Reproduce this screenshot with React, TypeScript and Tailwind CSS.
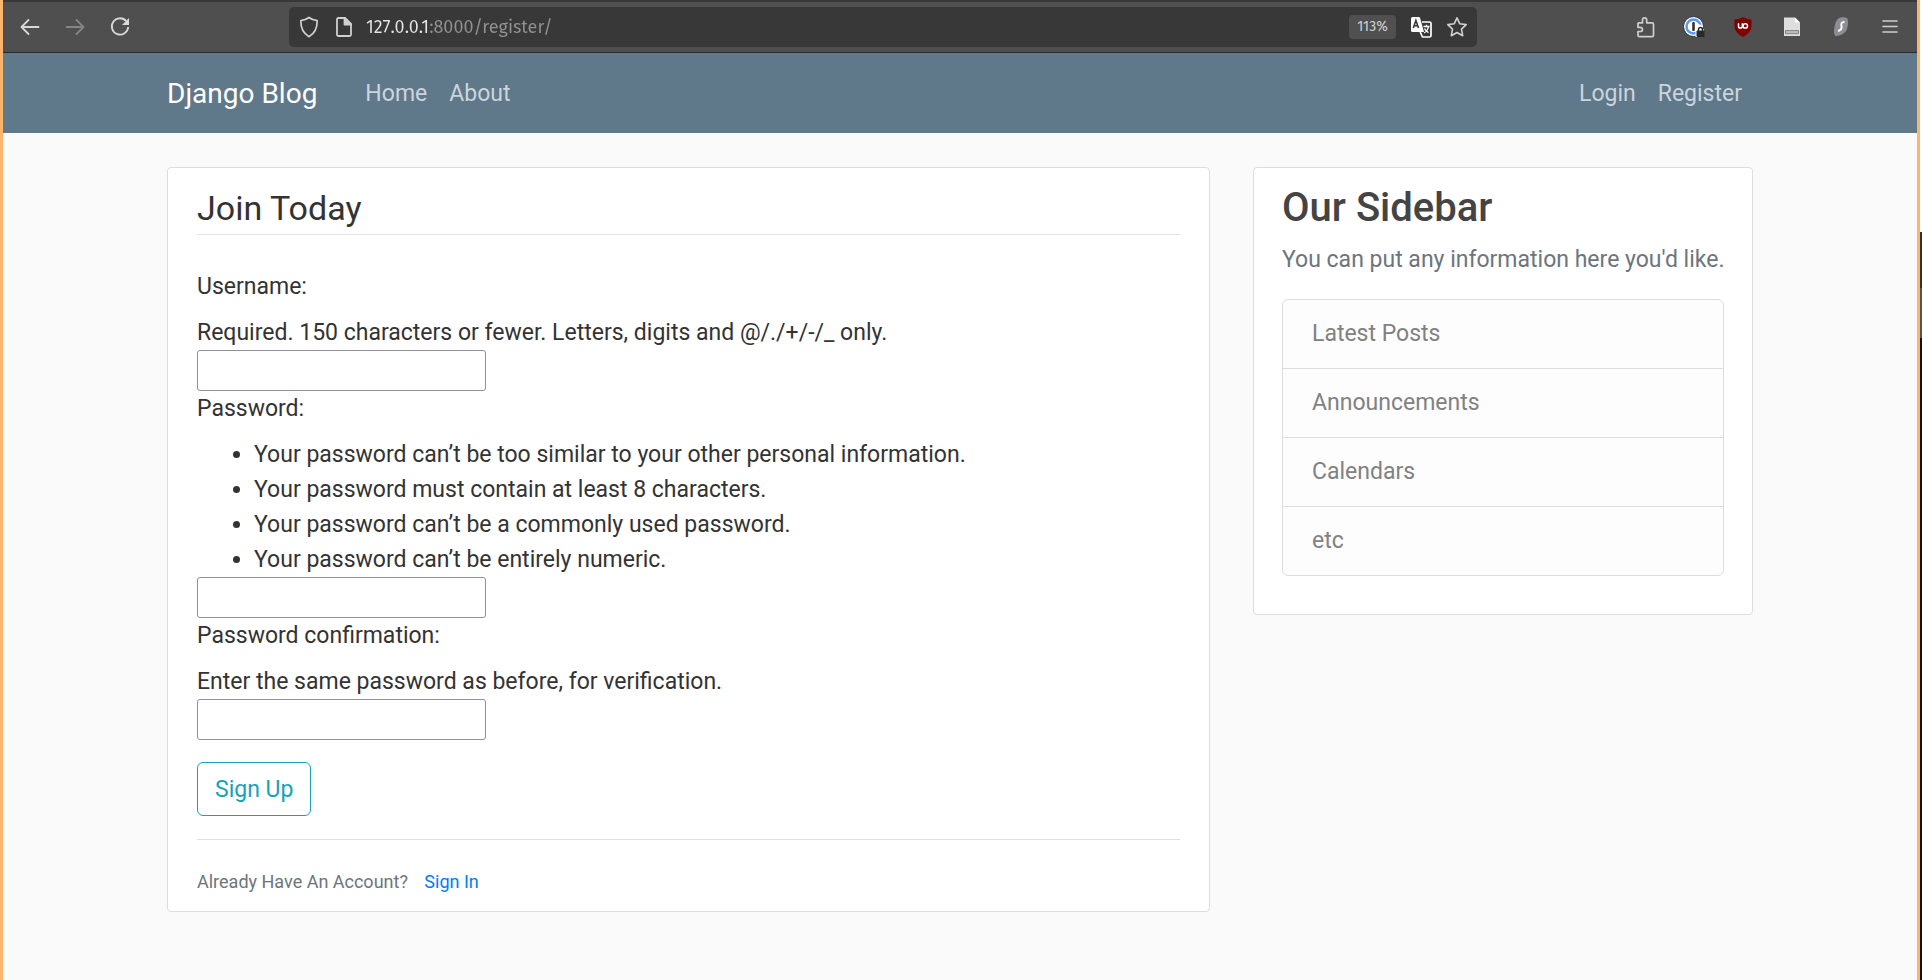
import React from "react";

type FieldProps = { id: string; label: string; type: string; children: React.ReactNode };

function Field({ id, label, type, children }: FieldProps) {
  return (
    <div>
      <label htmlFor={id} className="mb-[11px] block">{label}</label>
      {children}
      <input
        id={id}
        type={type}
        className="block h-[41px] w-[289px] rounded-[3px] border border-[#8f8f9d] bg-white px-1 outline-none"
      />
    </div>
  );
}

const passwordRules = [
  "Your password can’t be too similar to your other personal information.",
  "Your password must contain at least 8 characters.",
  "Your password can’t be a commonly used password.",
  "Your password can’t be entirely numeric.",
];

const sidebarItems = ["Latest Posts", "Announcements", "Calendars", "etc"];

function BrowserBar() {
  return (
    <div className="flex h-[53px] items-center border-t-2 border-b border-t-[#383838] border-b-[#2a2a2a] bg-[#4f4f4f] pr-4 pl-4 font-['Fira_Sans','Noto_Sans',sans-serif] text-[#d0d0d0]">
      <div className="flex w-[270px] shrink-0 items-center gap-[23px]">
        <button aria-label="Back" className="text-[#d8d8d8]">
          <svg width="22" height="22" viewBox="0 0 22 22" fill="none" stroke="currentColor" strokeWidth="1.8" strokeLinecap="round" strokeLinejoin="round"><path d="M19.5 11H3M9.5 4 2.5 11l7 7" /></svg>
        </button>
        <button aria-label="Forward" className="text-[#858585]">
          <svg width="22" height="22" viewBox="0 0 22 22" fill="none" stroke="currentColor" strokeWidth="1.8" strokeLinecap="round" strokeLinejoin="round"><path d="M2.5 11H19M12.5 4l7 7-7 7" /></svg>
        </button>
        <button aria-label="Reload" className="text-[#d8d8d8]">
          <svg width="22" height="22" viewBox="0 0 22 22" fill="none" stroke="currentColor" strokeWidth="1.8"><path d="M17.3 5.2A8.2 8.2 0 1 0 19.2 11" /><path d="M20 2v7h-7z" fill="currentColor" stroke="none" /></svg>
        </button>
      </div>
      <div className="flex h-10 min-w-0 flex-1 items-center rounded-[5px] bg-[#383838] px-[9px]">
        <svg width="22" height="22" viewBox="0 0 22 22" fill="none" stroke="currentColor" strokeWidth="1.7" strokeLinejoin="round"><path d="M11 1.5c2.4 1.9 4.900 2.800 8.200 3.100C19.300 12 17 17.300 11 20.700C5 17.300 2.700 12 2.800 4.600 6.100 4.300 8.600 3.400 11 1.500z" /></svg>
        <svg className="ml-[13px]" width="22" height="22" viewBox="0 0 22 22" fill="none" stroke="currentColor" strokeWidth="1.8" strokeLinejoin="round"><path d="M5.500 2h6.500l6 6v10.500a1.500 1.500 0 0 1-1.500 1.500h-11A1.500 1.500 0 0 1 4 18.500v-15A1.500 1.500 0 0 1 5.500 2z" /><path d="M11.500 2v6.500H18z" fill="currentColor" /></svg>
        <input
          type="text"
          aria-label="Address"
          defaultValue="127.0.0.1:8000/register/"
          className="ml-[11px] h-8 min-w-0 flex-1 bg-[linear-gradient(90deg,#e4e4e4_62px,#919191_62px)] bg-clip-text text-[18px] text-transparent outline-none"
        />
        <button className="h-6 w-[47px] rounded-[4px] bg-[#505050] text-[14px] leading-6 text-[#d0d0d0]">113%</button>
        <button aria-label="Translate" className="ml-[14px]">
          <svg width="22" height="22" viewBox="0 0 22 22"><path d="M2.500 1h6.200a1.500 1.500 0 0 1 1.400 1L14 16H2.500A1.500 1.500 0 0 1 1 14.500v-12A1.500 1.500 0 0 1 2.500 1z" fill="#fff" /><path d="M3.300 12 5.900 4.500 8.500 12M4.200 9.700h3.500" fill="none" stroke="#383838" strokeWidth="1.600" /><path d="M12 6h7.500A1.500 1.500 0 0 1 21 7.500v12a1.500 1.500 0 0 1-1.500 1.500h-7l-2.300-5" fill="none" stroke="#fff" strokeWidth="1.700" /><path d="M13.500 10.500h6M16.500 8.700v1.800M18.500 10.500c-.5 3-2 5-4.500 6.500M14.500 12.500c.8 2 2 3.200 4 4.200" fill="none" stroke="#fff" strokeWidth="1.300" /></svg>
        </button>
        <button aria-label="Bookmark" className="ml-[14px]">
          <svg width="22" height="22" viewBox="0 0 22 22" fill="none" stroke="#d0d0d0" strokeWidth="1.600" strokeLinejoin="round"><path d="m11 1.800 2.800 6 6.400.8-4.700 4.500 1.200 6.600L11 16.500l-5.700 3.200 1.200-6.600L1.800 8.600l6.400-.8z" /></svg>
        </button>
      </div>
      <div className="flex w-[424px] shrink-0 items-center justify-end gap-[27px]">
        <button aria-label="Extensions">
          <svg width="22" height="22" viewBox="0 0 22 22" fill="none" stroke="#cfcfcf" strokeWidth="1.700" strokeLinejoin="round"><path d="M4.500 6.800h4V3.900a2.100 2.100 0 0 1 4.200 0v2.900h5.400a1.400 1.400 0 0 1 1.400 1.400v11a1.400 1.400 0 0 1-1.400 1.400H5.400A1.400 1.400 0 0 1 4 19.200v-3.700h2.300a2.100 2.100 0 0 0 0-4.200H4V7.300z" /></svg>
        </button>
        <button aria-label="Password manager">
          <svg width="22" height="22" viewBox="0 0 22 22"><circle cx="10.500" cy="10.500" r="10" fill="#fff" stroke="#26323f" strokeWidth="1" /><circle cx="10.500" cy="10.500" r="7" fill="none" stroke="#5b95f5" strokeWidth="2.500" /><rect x="9.200" y="6" width="2.600" height="9" rx="1" fill="#333" /><path d="M12.500 17v-4a3.500 3.500 0 0 1 7-1.500L21 14v2h-7v5h-1.500z" fill="#fff" /><rect x="13.500" y="14.500" width="8" height="6.500" rx="1" fill="#292929" /><path d="M15.500 15v-1.500a2 2 0 0 1 4 0V15" fill="none" stroke="#292929" strokeWidth="1.500" /></svg>
        </button>
        <button aria-label="Content blocker">
          <svg width="22" height="22" viewBox="0 0 22 22"><path d="M11 1c2.500 1.500 5.500 2.300 8.500 2.500V10c0 5-4 8.500-8.500 11-4.500-2.500-8.500-6-8.500-11V3.500C5.500 3.300 8.500 2.500 11 1z" fill="#800000" /><path d="M6.500 7.200v3a1.900 1.900 0 0 0 3.800 0v-3" fill="none" stroke="#fff" strokeWidth="1.500" /><circle cx="13.300" cy="9.900" r="2.200" fill="none" stroke="#fff" strokeWidth="1.500" /></svg>
        </button>
        <button aria-label="Page notes">
          <svg width="22" height="22" viewBox="0 0 22 22"><path d="M3 1.500h11l5 5V20H3z" fill="#dedede" /><path d="M14 1.500v5h5z" fill="#fff" /><path d="M4.500 14.500h13v3.200h-13z" fill="#bbb" stroke="#888" /></svg>
        </button>
        <button aria-label="VPN">
          <svg width="22" height="22" viewBox="0 0 22 22"><path d="M10 1.800C12.500 1 15.500 1.300 17.500 2.500c.8 3 .7 7-.5 10.500-1.500 4-5.500 6.500-11 7.200-1.800-1-2.300-3.200-1.800-7.200.6-5 2.300-10.300 5.800-11.200z" fill="#8d8d93" /><path d="M14.500 6c-2.300 0-3.300.8-3.200 2.600.1 1.100.5 2 .2 3.400-.4 1.900-1.500 2.700-3.500 2.700" fill="none" stroke="#fff" strokeWidth="1.900" /></svg>
        </button>
        <button aria-label="Menu">
          <svg width="22" height="22" viewBox="0 0 22 22" fill="none" stroke="#d0d0d0" strokeWidth="1.600" strokeLinecap="round"><path d="M4 5h14M4 10.500h14M4 16h14" /></svg>
        </button>
      </div>
    </div>
  );
}

export default function App() {
  return (
    <div className="flex min-h-screen bg-[#fafafa]">
      <div className="w-[3px] shrink-0 bg-[#ffb46e]" />
      <div className="min-w-0 flex-1 font-[Roboto,sans-serif] text-[23px] leading-[35px] text-[#333333]">
        <BrowserBar />
        <header className="bg-[#5f788a]">
          <nav className="mx-auto flex h-20 max-w-[1586px] items-center text-[#cbd5db]">
            <a href="#" className="text-[28px] text-white">Django Blog</a>
            <a href="#" className="ml-[48px]">Home</a>
            <a href="#" className="ml-[22px]">About</a>
            <a href="#" className="ml-auto">Login</a>
            <a href="#" className="mr-[11px] ml-[22px]">Register</a>
          </nav>
        </header>
        <main className="mx-auto mt-[34px] flex max-w-[1586px] items-start gap-[43px]">
          <section className="min-w-0 flex-1 rounded-[4px] border border-[#dddddd] bg-white px-[29px] pt-[11px] pb-[12px]">
            <form>
              <h1 className="mb-[34px] border-b border-[#dee2e6] pt-[8px] pb-[5px] text-[34px] leading-[42px]">Join Today</h1>
              <Field id="username" label="Username:" type="text">
                <p>Required. 150 characters or fewer. Letters, digits and @/./+/-/_ only.</p>
              </Field>
              <Field id="password1" label="Password:" type="password">
                <ul className="list-disc pl-[57px]">
                  {passwordRules.map((rule) => <li key={rule}>{rule}</li>)}
                </ul>
              </Field>
              <Field id="password2" label="Password confirmation:" type="password">
                <p>Enter the same password as before, for verification.</p>
              </Field>
              <button type="button" className="mt-[22px] h-[54px] rounded-[6px] border border-[#17a2b8] px-[17px] text-[#17a2b8]">Sign Up</button>
            </form>
            <div className="mt-[23px] border-t border-[#dfdfdf] pt-[23px]">
              <small className="text-[18px] text-[#6c757d]">
                Already Have An Account? <a href="#" className="ml-[12px] text-[#007bff]">Sign In</a>
              </small>
            </div>
          </section>
          <aside className="w-[500px] shrink-0 rounded-[4px] border border-[#dddddd] bg-white px-[28px] pt-[16px] pb-[38px]">
            <h2 className="text-[40px] leading-[48px] font-medium text-[#444444]">Our Sidebar</h2>
            <p className="mt-[10px] whitespace-nowrap text-[#6c757d]">You can put any information here you'd like.</p>
            <ul className="mt-[22px] divide-y divide-[#dddddd] rounded-[6px] border border-[#dddddd] bg-[#fdfdfd] leading-[34px] text-[#818182]">
              {sidebarItems.map((item) => <li key={item} className="px-[29px] py-[17px]">{item}</li>)}
            </ul>
          </aside>
        </main>
      </div>
      <div className="w-[3px] shrink-0 bg-[#ffb46e]" />
      <div className="flex w-[2px] shrink-0 flex-col bg-[#111111]">
        <div className="h-[232px] bg-white" />
        <div className="h-[56px] bg-[#303232]" />
        <div className="h-[50px] bg-[#545454]" />
      </div>
    </div>
  );
}
